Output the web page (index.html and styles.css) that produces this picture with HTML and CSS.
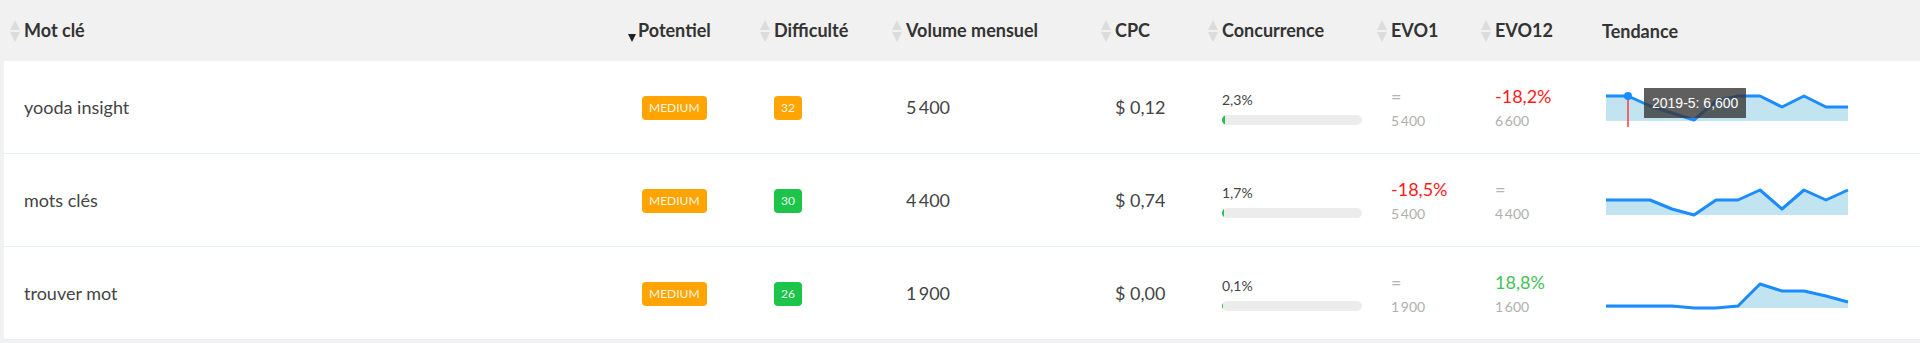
FILE: index.html
```html
<!DOCTYPE html>
<html lang="fr">
<head>
  <meta charset="UTF-8" />
  <title>Mots clés</title>
  <link rel="stylesheet" href="styles.css">
</head>
<body>
  <table class="kw-table">
    <colgroup>
      <col class="c-kw">
      <col class="c-pot">
      <col class="c-dif">
      <col class="c-vol">
      <col class="c-cpc">
      <col class="c-conc">
      <col class="c-evo1">
      <col class="c-evo12">
      <col class="c-trend">
    </colgroup>
    <thead>
      <tr>
        <th><svg class="sort" width="10" height="22" viewBox="0 0 10 22"><path d="M5 0L10 10H0Z M0 12H10L5 22Z"/></svg>Mot clé</th>
        <th><svg class="sort-active" width="8" height="8" viewBox="0 0 8 8"><path d="M0 0H8L4 8Z"/></svg>Potentiel</th>
        <th><svg class="sort" width="10" height="22" viewBox="0 0 10 22"><path d="M5 0L10 10H0Z M0 12H10L5 22Z"/></svg>Difficulté</th>
        <th><svg class="sort" width="10" height="22" viewBox="0 0 10 22"><path d="M5 0L10 10H0Z M0 12H10L5 22Z"/></svg>Volume mensuel</th>
        <th><svg class="sort" width="10" height="22" viewBox="0 0 10 22"><path d="M5 0L10 10H0Z M0 12H10L5 22Z"/></svg>CPC</th>
        <th><svg class="sort" width="10" height="22" viewBox="0 0 10 22"><path d="M5 0L10 10H0Z M0 12H10L5 22Z"/></svg>Concurrence</th>
        <th><svg class="sort" width="10" height="22" viewBox="0 0 10 22"><path d="M5 0L10 10H0Z M0 12H10L5 22Z"/></svg>EVO1</th>
        <th><svg class="sort" width="10" height="22" viewBox="0 0 10 22"><path d="M5 0L10 10H0Z M0 12H10L5 22Z"/></svg>EVO12</th>
        <th>Tendance</th>
      </tr>
    </thead>
    <tbody>
      <tr>
        <td>yooda insight</td>
        <td><span class="badge badge-medium">MEDIUM</span></td>
        <td><span class="badge badge-orange">32</span></td>
        <td>5&#8201;400</td>
        <td>$ 0,12</td>
        <td>
          <div class="conc">
            <span class="conc-val">2,3%</span>
            <div class="bar"><div class="bar-fill" style="width:3px"></div></div>
          </div>
        </td>
        <td>
          <div class="evo">
            <span class="evo-main eq">=</span>
            <span class="evo-sub">5&#8201;400</span>
          </div>
        </td>
        <td>
          <div class="evo">
            <span class="evo-main down">-18,2%</span>
            <span class="evo-sub">6&#8201;600</span>
          </div>
        </td>
        <td>
          <div class="spark">
            <svg width="245" height="32" viewBox="0 0 245 32">
              <polygon class="spark-area" points="1,3 23,3 45,13 67,20 89,27 111,8 133,3 155,3 177,14 199,3 221,14 243,14 243,28 1,28"/>
              <polyline class="spark-line" points="1,3 23,3 45,13 67,20 89,27 111,8 133,3 155,3 177,14 199,3 221,14 243,14"/>
              <line class="spark-cursor" x1="23" y1="3" x2="23" y2="34"/>
              <circle class="spark-dot" cx="23" cy="3" r="4"/>
            </svg>
            <div class="spark-tip">2019-5: 6,600</div>
          </div>
        </td>
      </tr>
      <tr>
        <td>mots clés</td>
        <td><span class="badge badge-medium">MEDIUM</span></td>
        <td><span class="badge badge-green">30</span></td>
        <td>4&#8201;400</td>
        <td>$ 0,74</td>
        <td>
          <div class="conc">
            <span class="conc-val">1,7%</span>
            <div class="bar"><div class="bar-fill" style="width:2px"></div></div>
          </div>
        </td>
        <td>
          <div class="evo">
            <span class="evo-main down">-18,5%</span>
            <span class="evo-sub">5&#8201;400</span>
          </div>
        </td>
        <td>
          <div class="evo">
            <span class="evo-main eq">=</span>
            <span class="evo-sub">4&#8201;400</span>
          </div>
        </td>
        <td>
          <div class="spark">
            <svg width="245" height="32" viewBox="0 0 245 32">
              <polygon class="spark-area" points="1,14 23,14 45,14 67,23 89,29 111,14 133,14 155,4 177,23 199,4 221,14 243,4 243,29 1,29"/>
              <polyline class="spark-line" points="1,14 23,14 45,14 67,23 89,29 111,14 133,14 155,4 177,23 199,4 221,14 243,4"/>
            </svg>
          </div>
        </td>
      </tr>
      <tr>
        <td>trouver mot</td>
        <td><span class="badge badge-medium">MEDIUM</span></td>
        <td><span class="badge badge-green">26</span></td>
        <td>1&#8201;900</td>
        <td>$ 0,00</td>
        <td>
          <div class="conc">
            <span class="conc-val">0,1%</span>
            <div class="bar"><div class="bar-fill" style="width:1px"></div></div>
          </div>
        </td>
        <td>
          <div class="evo">
            <span class="evo-main eq">=</span>
            <span class="evo-sub">1&#8201;900</span>
          </div>
        </td>
        <td>
          <div class="evo">
            <span class="evo-main up">18,8%</span>
            <span class="evo-sub">1&#8201;600</span>
          </div>
        </td>
        <td>
          <div class="spark">
            <svg width="245" height="32" viewBox="0 0 245 32">
              <polygon class="spark-area" points="1,27 23,27 45,27 67,27 89,29 111,29 133,27 155,5 177,12 199,12 221,17 243,23 243,29 1,29"/>
              <polyline class="spark-line" points="1,27 23,27 45,27 67,27 89,29 111,29 133,27 155,5 177,12 199,12 221,17 243,23"/>
            </svg>
          </div>
        </td>
      </tr>
    </tbody>
  </table>
</body>
</html>
```

FILE: styles.css
```css
body {
  margin: 0;
  background: #f1f1f1;
  font-family: Lato, "Open Sans", sans-serif;
  color: #444;
}
.kw-table {
  margin-left: 4px;
  width: calc(100% - 4px);
  border-collapse: collapse;
  table-layout: fixed;
  background: #fff;
}
.c-kw { width: 614px; }
.c-pot { width: 136px; }
.c-dif { width: 132px; }
.c-vol { width: 209px; }
.c-cpc { width: 107px; }
.c-conc { width: 169px; }
.c-evo1 { width: 104px; }
.c-evo12 { width: 107px; }

th {
  background: #f1f1f1;
  height: 61px;
  padding: 0 0 0 20px;
  text-align: left;
  font-size: 18px;
  font-weight: 700;
  color: #333;
  white-space: nowrap;
}
.sort {
  fill: #dcdcdc;
  width: 10px;
  margin-left: -14px;
  margin-right: 4px;
  vertical-align: -5px;
}
.sort-active {
  fill: #222;
  margin-left: -10px;
  margin-right: 2px;
  vertical-align: -5px;
}
td {
  height: 92px;
  padding: 0 0 0 20px;
  border-bottom: 1px solid #e6f1f3;
  font-size: 18px;
  vertical-align: middle;
  white-space: nowrap;
}

.badge {
  display: inline-block;
  height: 24px;
  line-height: 24px;
  padding: 0 7px;
  border-radius: 4px;
  font-size: 12px;
  color: #fff6e2;
  vertical-align: middle;
}
.badge-medium {
  background: #ffa400;
  margin-left: 4px;
}
.badge-orange { background: #ffa400; }
.badge-green { background: #1dc44a; color: #eafbea; }

.conc {
  display: flex;
  flex-direction: column;
  gap: 6px;
  padding-top: 2px;
}
.conc-val {
  font-size: 14px;
  line-height: 18px;
  color: #444;
}
.bar {
  width: 140px;
  height: 10px;
  border-radius: 5px;
  background: #ececec;
  overflow: hidden;
}
.bar-fill {
  height: 100%;
  background: #1dc44a;
  border-radius: 5px 0 0 5px;
}

.evo {
  display: flex;
  flex-direction: column;
  gap: 4px;
  padding-top: 2px;
}
.evo-main {
  font-size: 18px;
  line-height: 22px;
}
.evo-main.eq { color: #b4b4b4; }
.evo-main.down { color: #ff1a1a; }
.evo-main.up { color: #45c157; }
.evo-sub {
  font-size: 14px;
  line-height: 20px;
  color: #b0b0b0;
}

.spark {
  position: relative;
  width: 245px;
  height: 32px;
  margin-left: 3px;
  margin-top: 4px;
}
.spark svg {
  display: block;
  overflow: visible;
}
.spark-area { fill: #c2e4f1; }
.spark-line {
  fill: none;
  stroke: #1a8cff;
  stroke-width: 3;
  stroke-linejoin: round;
}
.spark-cursor {
  stroke: #ff3b3b;
  stroke-width: 1.5;
}
.spark-dot { fill: #1a8cff; }
.spark-tip {
  position: absolute;
  left: 39px;
  top: -5px;
  padding: 0 8px;
  height: 30px;
  line-height: 30px;
  background: rgba(55, 55, 55, 0.8);
  color: #fff;
  font-family: "Liberation Sans", Arial, sans-serif;
  font-size: 14px;
}
```
